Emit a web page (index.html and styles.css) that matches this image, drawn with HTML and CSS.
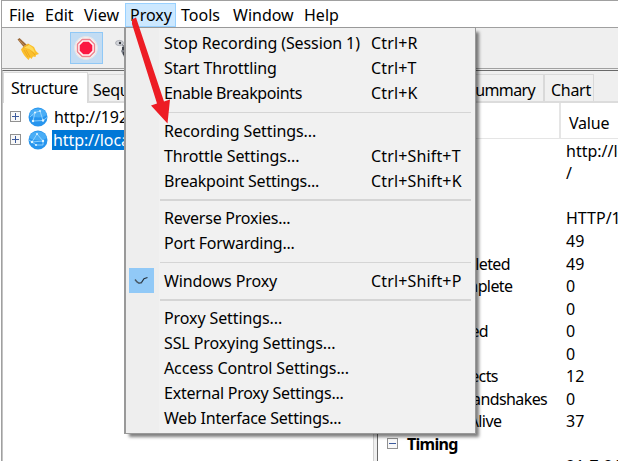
FILE: index.html
```
<!DOCTYPE html>
<html lang="en">
<head>
<meta charset="utf-8">
<title>Charles</title>
<link rel="stylesheet" href="styles.css">
</head>
<body>
<div class="window">
  <nav class="menubar">
    <span class="m-file">File</span><span class="m-edit">Edit</span><span class="m-view">View</span><span class="m-proxy open">Proxy</span><span class="m-tools">Tools</span><span class="m-window">Window</span><span class="m-help">Help</span>
  </nav>
  <div class="toolbar">
    <svg class="broom" width="24" height="24" viewBox="0 0 24 24">
      <path d="M1.5 2.500 3.500 1 11 8 8 10.500z" fill="#9b6a3b"/>
      <path d="M3 3 9 9" stroke="#c08a50" stroke-width="1"/>
      <path d="M7 10 12 6.500 18 10Q19 14 23 17L20 18 19.500 20 17 19.500 15.500 22 14 20.500 12.500 23Q7 18 5 12.500z" fill="#fbc02d"/>
      <path d="M7 11 13 7.500M10 13 14 20M13 11 19 18M8 13 12 20" stroke="#eaa21c" stroke-width=".8" fill="none"/>
      <path d="M8 10.500 13 8 17 11 19 16 13 12z" fill="#ffda57"/>
    </svg>
    <span class="record">
      <svg width="24" height="24" viewBox="0 0 24 24">
        <circle cx="12" cy="12" r="11.700" fill="#f5f3f3"/>
        <circle cx="12" cy="12" r="11.300" fill="none" stroke="#e2dcdd" stroke-width=".7"/>
        <path d="M8.200 3.500h7.600l4.700 4.700v7.600l-4.700 4.700H8.200l-4.700-4.700V8.200z" fill="#fff5f5" stroke="#f0808c" stroke-width="1.400" stroke-linejoin="round"/>
        <path d="M9.300 5.700h5.400l3.600 3.600v5.400l-3.600 3.600H9.300l-3.600-3.600V9.300z" fill="#fb1742"/>
      </svg>
    </span>
    <svg class="turtle" width="20" height="20" viewBox="0 0 20 20">
      <ellipse cx="4.500" cy="4" rx="4" ry="2.600" fill="#d3d5da" stroke="#8b8f98" stroke-width=".6"/>
      <circle cx="5" cy="4" r="1.200" fill="#33363c"/>
      <path d="M7 5 10 7 16 10v8h-7L6 12l2-3z" fill="#777b84"/>
      <path d="M7 8h2v3H7zM8 13h2v3H8z" fill="#3f434b"/>
    </svg>
  </div>
  <div class="panes">
    <section class="left">
      <div class="tabs"><span class="tab active">Structure</span><span class="tab seq">Sequence</span></div>
      <div class="tree">
        <div class="node"><i class="exp"></i>
          <svg width="20" height="20" viewBox="0 0 20 20"><circle cx="10" cy="10" r="9.500" fill="#2795ee"/><path d="M1 8a9.500 9.500 0 0 1 18 0q-8 5-18 0z" fill="#49adf6"/><path d="M5 14 7 5.500 12 4l3 9.500zM2 10 7 5.500M15 13.500l4-3" fill="none" stroke="#a5dcff" stroke-width=".8"/><g fill="#e4f7ff"><circle cx="7" cy="5.500" r="1"/><circle cx="12" cy="4" r=".9"/><circle cx="5" cy="14" r="1.200"/><circle cx="15" cy="13.500" r="1.200"/></g></svg>
          <span class="host">http://192.168.1.1</span></div>
        <div class="node"><i class="exp"></i>
          <svg width="20" height="20" viewBox="0 0 20 20"><circle cx="10" cy="10" r="9.500" fill="#2795ee"/><path d="M1 8a9.500 9.500 0 0 1 18 0q-8 5-18 0z" fill="#49adf6"/><path d="M4 12 9 4l6 7zM4 12l4 3h7v-4M1 10l3 2" fill="none" stroke="#a5dcff" stroke-width=".8"/><g fill="#e4f7ff"><circle cx="9" cy="4" r="1"/><circle cx="4" cy="12" r="1.200"/><circle cx="15" cy="11" r="1.200"/><circle cx="8" cy="15" r="1"/></g></svg>
          <span class="host sel">http://localhost:8080</span></div>
      </div>
    </section>
    <div class="divider"></div>
    <section class="right">
      <div class="tabs"><span class="tab overview">Overview</span><span class="tab summary">Summary</span><span class="tab chart">Chart</span></div>
      <div class="thead"><span class="name">Name</span><span class="value">Value</span></div>
      <div class="rows">
        <div class="row"><span class="name"></span><span>http://localhost</span></div>
        <div class="row"><span class="name"></span><span>/</span></div>
        <div class="row"></div>
        <div class="row"><span class="name"></span><span>HTTP/1.1</span></div>
        <div class="row"><span class="name"></span><span>49</span></div>
        <div class="row"><span class="name">Completed</span><span>49</span></div>
        <div class="row"><span class="name">Incomplete</span><span>0</span></div>
        <div class="row"><span class="name"></span><span>0</span></div>
        <div class="row"><span class="name">Blocked</span><span>0</span></div>
        <div class="row"><span class="name"></span><span>0</span></div>
        <div class="row"><span class="name">Connects</span><span>12</span></div>
        <div class="row"><span class="name">TLS Handshakes</span><span>0</span></div>
        <div class="row"><span class="name">Kept Alive</span><span>37</span></div>
        <div class="row group"><i class="exp minus"></i><b>Timing</b></div>
        <div class="row last"><span class="name"></span><span>21-7-21</span></div>
      </div>
    </section>
  </div>
</div>

<div class="menu">
  <div class="item"><span>Stop Recording (Session 1)</span><kbd>Ctrl+R</kbd></div>
  <div class="item"><span>Start Throttling</span><kbd>Ctrl+T</kbd></div>
  <div class="item"><span class="tight">Enable Breakpoints</span><kbd>Ctrl+K</kbd></div>
  <hr class="thin">
  <div class="item"><span>Recording Settings...</span></div>
  <div class="item"><span>Throttle Settings...</span><kbd>Ctrl+Shift+T</kbd></div>
  <div class="item"><span class="snug">Breakpoint Settings...</span><kbd>Ctrl+Shift+K</kbd></div>
  <hr>
  <div class="item"><span class="snug">Reverse Proxies...</span></div>
  <div class="item"><span class="snug">Port Forwarding...</span></div>
  <hr class="thin">
  <div class="item checked"><svg class="check" width="25" height="25" viewBox="0 0 25 25"><path d="M6 11.500 8 14l2 1.200 3-.700" fill="none" stroke="#4a5a68" stroke-width="1.500"/><path d="M12.500 14.500 15 10.700 18.500 9.500" fill="none" stroke="#24313d" stroke-width="1.200"/></svg><span>Windows Proxy</span><kbd>Ctrl+Shift+P</kbd></div>
  <hr>
  <div class="item"><span>Proxy Settings...</span></div>
  <div class="item"><span>SSL Proxying Settings...</span></div>
  <div class="item"><span>Access Control Settings...</span></div>
  <div class="item"><span class="snug">External Proxy Settings...</span></div>
  <div class="item"><span class="snug">Web Interface Settings...</span></div>
</div>
<svg class="arrow" width="60" height="120" viewBox="0 0 60 120"><path d="M12 19.500 16 17.500 44 101.500 50 99.500 47.500 123.500 31 105.500 37 103.500 12 24z" fill="#ed1c24"/></svg>
</body>
</html>
```

FILE: styles.css
```
* { box-sizing: border-box; }
body {
  margin: 0;
  width: 618px;
  height: 461px;
  overflow: hidden;
  position: relative;
  background: #fff;
  color: #000;
  font: 16px/22px "Noto Sans", "Open Sans", sans-serif;
  white-space: nowrap;
}
.window {
  height: 461px;
  margin-left: 1px;
  border-top: 1px solid #a0a0a0;
  border-left: 1px solid #a0a0a0;
  display: flex;
  flex-direction: column;
}
.menubar { height: 27px; flex: none; display: flex; align-items: stretch; border-bottom: 1px solid #a0a0a0; padding-top: 2px; }
.menubar span { line-height: 24px; }
.m-file { width: 36px; margin-left: 7px; }
.m-edit { width: 39px; }
.m-view { width: 40px; }
.menubar .m-proxy { width: 51px; padding-left: 4px; background: #cce8ff; border: 1px solid #99d1ff; line-height: 22px; margin-left: 1px; }
.m-tools { width: 52px; margin-left: 5px; }
.m-window { width: 71px; }
.toolbar { height: 41px; flex: none; background: #efefef; border-bottom: 1px solid #a0a0a0; display: flex; }
.broom { margin: 9px 0 0 14px; }
.record { width: 33px; height: 32px; margin: 4px 0 0 30px; padding: 3px; background: #c2dcf3; border: 1px solid #90c8f6; }
.turtle { margin: 11px 0 0 12px; }
.panes { flex: 1; min-height: 0; display: flex; background: #efefef; padding-top: 1px; }
.left { width: 371px; flex: none; border-top: 1px solid #696969; border-left: 1px solid #c4c4c4; }
.right { flex: 1; min-width: 0; border-top: 1px solid #696969; border-left: 1px solid #696969; overflow: hidden; }
.divider { width: 4px; flex: none; border-left: 1px solid #d0d0d0; }
.tabs { height: 32px; display: flex; align-items: flex-end; border-bottom: 2px solid #dcdcdc; letter-spacing: -.3px; }
.tab { height: 27px; flex: none; border: 1px solid #d9d9d9; border-bottom: 0; line-height: 31px; background: #f0f0f0; padding-left: 4px; }
.tab.active { width: 85px; height: 31px; padding-left: 7px; background: #fff; margin-bottom: -2px; line-height: 31px; }
.tab.seq { width: 80px; }
.tab.overview { width: 86px; }
.tab.summary { width: 80px; padding-left: 2px; letter-spacing: -.6px; }
.tab.chart { width: 50px; padding-left: 6px; }
.tree { background: #fff; height: 360px; padding-top: 2px; }
.node { height: 23px; display: flex; align-items: center; }
.node svg { margin-left: 7px; }
.exp { width: 11px; height: 11px; margin-left: 7px; border: 1px solid #919191; flex: none; background: linear-gradient(#3c5a9c, #3c5a9c) center / 7px 1px no-repeat, linear-gradient(#3c5a9c, #3c5a9c) center / 1px 7px no-repeat, #f8f8f8; }
.exp.minus { background: linear-gradient(#3c5a9c, #3c5a9c) center / 7px 1px no-repeat, #f8f8f8; margin-left: 9px; }
.host { margin-left: 4px; padding: 0 2px; line-height: 20px; letter-spacing: -.1px; }
.host.sel { background: #0078d7; color: #fff; padding-left: 1px; }
.thead { height: 36px; background: #fff; border-bottom: 1px solid #e5e5e5; display: flex; align-items: center; }
.thead .name { align-self: stretch; width: 183px; border-right: 2px solid #e5e5e5; padding-left: 10px; margin-right: 8px; }
.thead .value { padding-top: 4px; letter-spacing: -.2px; }
.rows { background: #fff; height: 340px; padding-top: .5px; }
.row { height: 22.55px; display: flex; align-items: center; }
.row .name { width: 188px; flex: none; padding-left: 55px; letter-spacing: -.6px; }
.row b { margin-left: 9px; letter-spacing: -.7px; }
.row.last { height: 19px; align-items: flex-start; }
.menu {
  position: absolute;
  left: 124px;
  top: 27px;
  width: 352px;
  height: 407px;
  background: linear-gradient(90deg, #eee 0 33px, #f1f1f1 33px);
  border: 1px solid #999;
  border-left-width: 2px;
  padding-top: 3px;
  box-shadow: 4px 4px 3px -1px rgba(0, 0, 0, .5);
}
.item { height: 25px; display: flex; align-items: center; padding-left: 38px; }
.item span { width: 207px; letter-spacing: -.1px; margin-top: -1px; }
.item .snug { letter-spacing: -.24px; }
.item .tight { letter-spacing: -.4px; }
.item kbd { font: inherit; letter-spacing: .15px; margin-top: -1px; }
.item.checked { padding-left: 3px; }
.check { background: #91c9f7; margin-right: 10px; flex: none; margin-top: -2px; }
.menu hr { height: 2px; margin: 5px 4px 5px 34px; border: 0; background: #d5d5d5; }
.menu hr.thin { height: 1px; margin: 6px 4px 6px 34px; }
.arrow { position: absolute; left: 120px; top: 0; overflow: visible; }
```
